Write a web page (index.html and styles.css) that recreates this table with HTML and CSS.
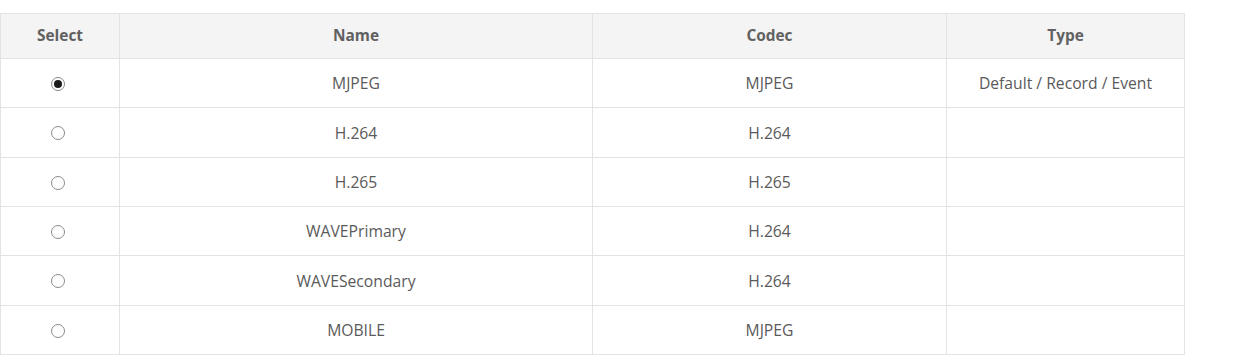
FILE: index.html
```html
<!DOCTYPE html>
<html>
<head>
<meta charset="utf-8">
<link rel="stylesheet" href="styles.css">
</head>
<body>
<div class="wrap">
<table class="grid">
  <colgroup>
    <col class="c-sel"><col class="c-name"><col class="c-codec"><col class="c-type">
  </colgroup>
  <thead>
    <tr><th>Select</th><th>Name</th><th>Codec</th><th>Type</th></tr>
  </thead>
  <tbody>
    <tr><td><span class="radio on"></span></td><td>MJPEG</td><td>MJPEG</td><td>Default / Record / Event</td></tr>
    <tr><td><span class="radio"></span></td><td>H.264</td><td>H.264</td><td></td></tr>
    <tr><td><span class="radio"></span></td><td>H.265</td><td>H.265</td><td></td></tr>
    <tr><td><span class="radio"></span></td><td>WAVEPrimary</td><td>H.264</td><td></td></tr>
    <tr><td><span class="radio"></span></td><td>WAVESecondary</td><td>H.264</td><td></td></tr>
    <tr><td><span class="radio"></span></td><td>MOBILE</td><td>MJPEG</td><td></td></tr>
  </tbody>
</table>
</div>
</body>
</html>
```
FILE: styles.css
```css
html, body { margin: 0; padding: 0; background: #fff; }
body { font-family: "Open Sans", "Noto Sans", sans-serif; color: #5a5a5a; }
.wrap { padding-top: 13px; }
.grid { border-collapse: collapse; width: 1184px; table-layout: fixed; font-size: 15.7px; }
.c-sel { width: 119px; }
.c-name { width: 473px; }
.c-codec { width: 354px; }
.c-type { width: 238px; }
.grid th, .grid td { border: 1px solid #e3e3e3; text-align: center; vertical-align: middle; padding: 0; line-height: 20px; }
.grid th { background: #f4f4f4; font-weight: 700; color: #616161; height: 43px; font-size: 15.4px; padding-bottom: 1px; }
.grid td { height: 48px; padding-bottom: 0; }
.grid tbody tr:nth-child(3n+2) td { height: 49px; }
.radio { display: inline-block; width: 14px; height: 14px; border: 1px solid #8a8a8a; border-radius: 50%; box-sizing: border-box; position: relative; vertical-align: middle; background: #fff; margin: 0 5px 2px 0; }
.radio.on::after { content: ""; position: absolute; left: 2px; top: 2px; width: 8px; height: 8px; border-radius: 50%; background: #1a1a1a; }
```
